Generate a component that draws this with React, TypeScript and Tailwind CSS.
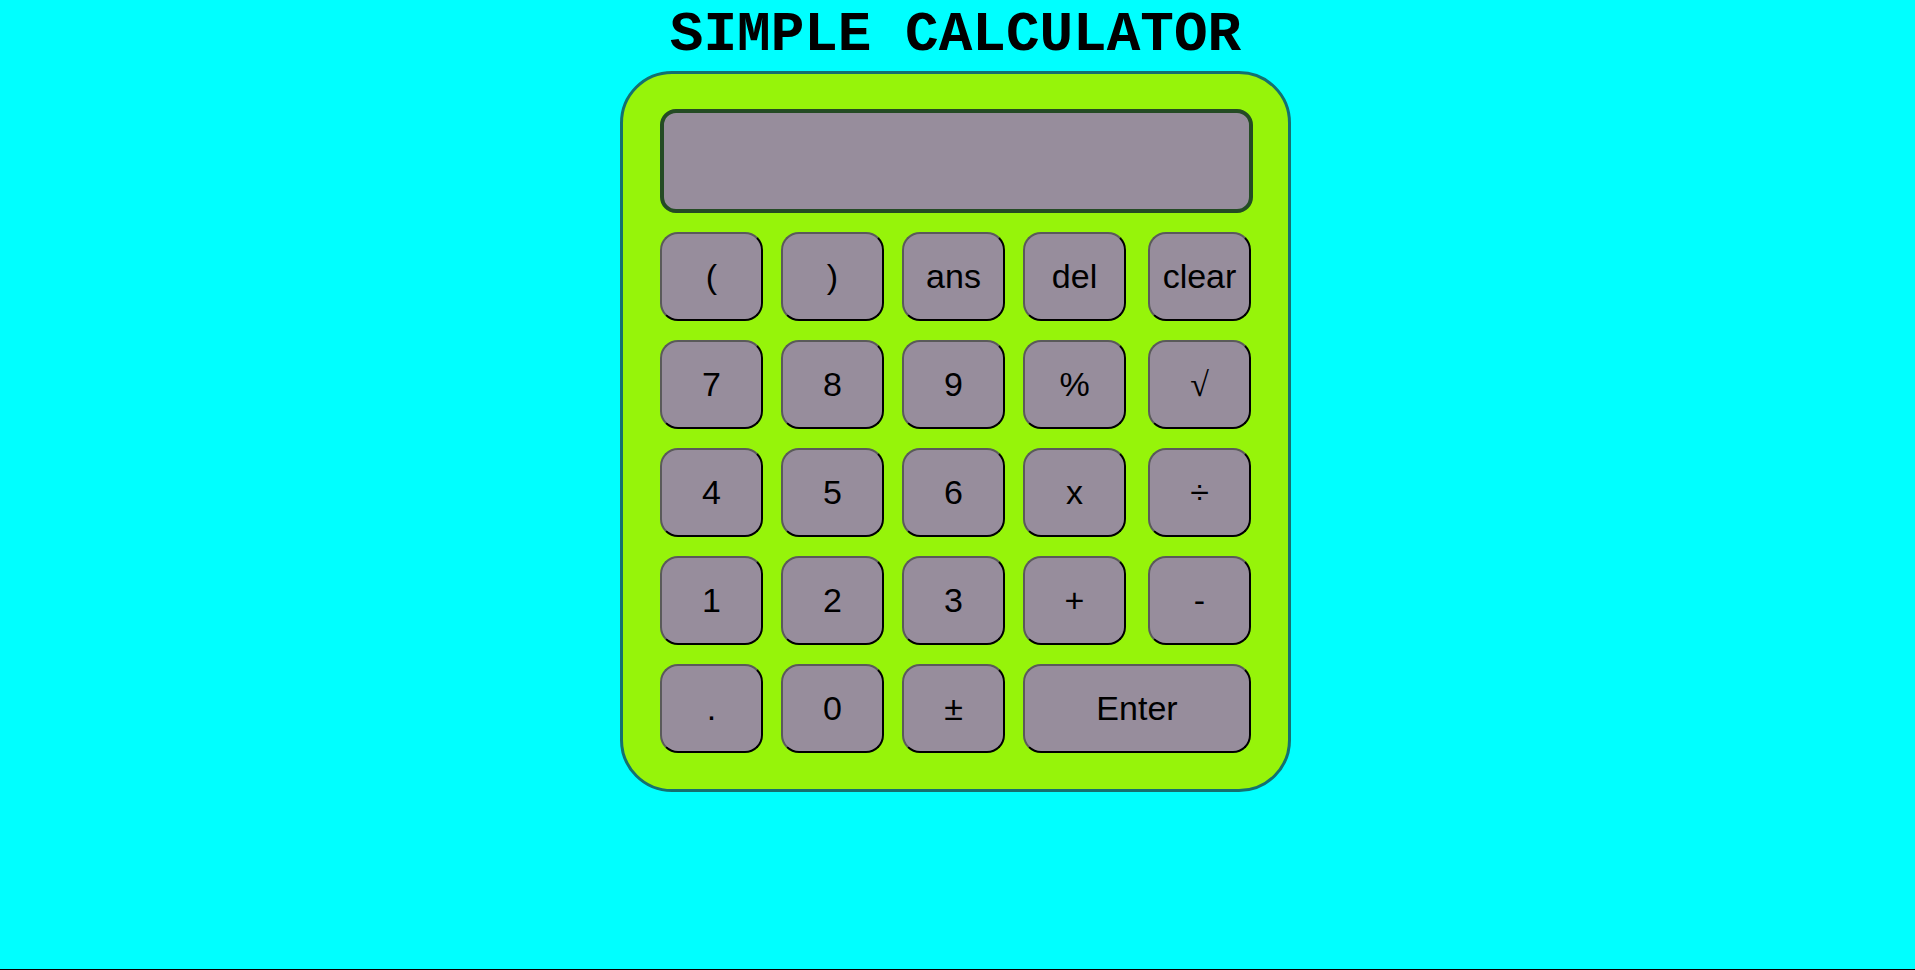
import React from "react";

const rows: string[][] = [
  ["(", ")", "ans", "del", "clear"],
  ["7", "8", "9", "%", "√"],
  ["4", "5", "6", "x", "÷"],
  ["1", "2", "3", "+", "-"],
  [".", "0", "±", "Enter"],
];

export default function App() {
  const keys = rows.flat();
  return (
    <div className="w-full h-[970px] bg-[#00ffff] border-b border-black flex flex-col items-center overflow-hidden pr-[4px]">
      <h1 className="mt-[3px] text-[56px] leading-[64px] font-bold text-black [font-family:'Liberation_Mono','Courier_New',monospace]">
        SIMPLE CALCULATOR
      </h1>
      <div className="mt-[4px] w-[671px] bg-[#96f40a] border-[3px] border-[#147070] rounded-[52px] pl-[37px] pr-[35px] pt-[35px] pb-[36px]">
        <div className="h-[104px] bg-[#978d9c] border-[4px] border-[#244b24] rounded-[16px]" />
        <div className="mt-[19px] w-[591px] grid grid-cols-[103px_103px_103px_103px_1fr] gap-x-[18px] gap-y-[19px]">
          {keys.map((k, i) => {
            const lastCol = i % 5 === 4 && k !== "Enter";
            return (
              <button
                key={i}
                className={
                  "h-[89px] bg-[#978d9c] rounded-[18px] border-2 border-t-[#5a5a5a] border-l-[#5a5a5a] border-b-black border-r-black text-black text-[34px] flex items-center justify-center " +
                  (k === "√"
                    ? "[font-family:'Liberation_Serif','Times_New_Roman',serif] "
                    : "[font-family:'Liberation_Sans',Arial,sans-serif] ") +
                  (k === "Enter" ? "col-span-2 " : "") +
                  (lastCol ? "w-[103px] justify-self-end" : "")
                }
              >
                {k}
              </button>
            );
          })}
        </div>
      </div>
    </div>
  );
}
